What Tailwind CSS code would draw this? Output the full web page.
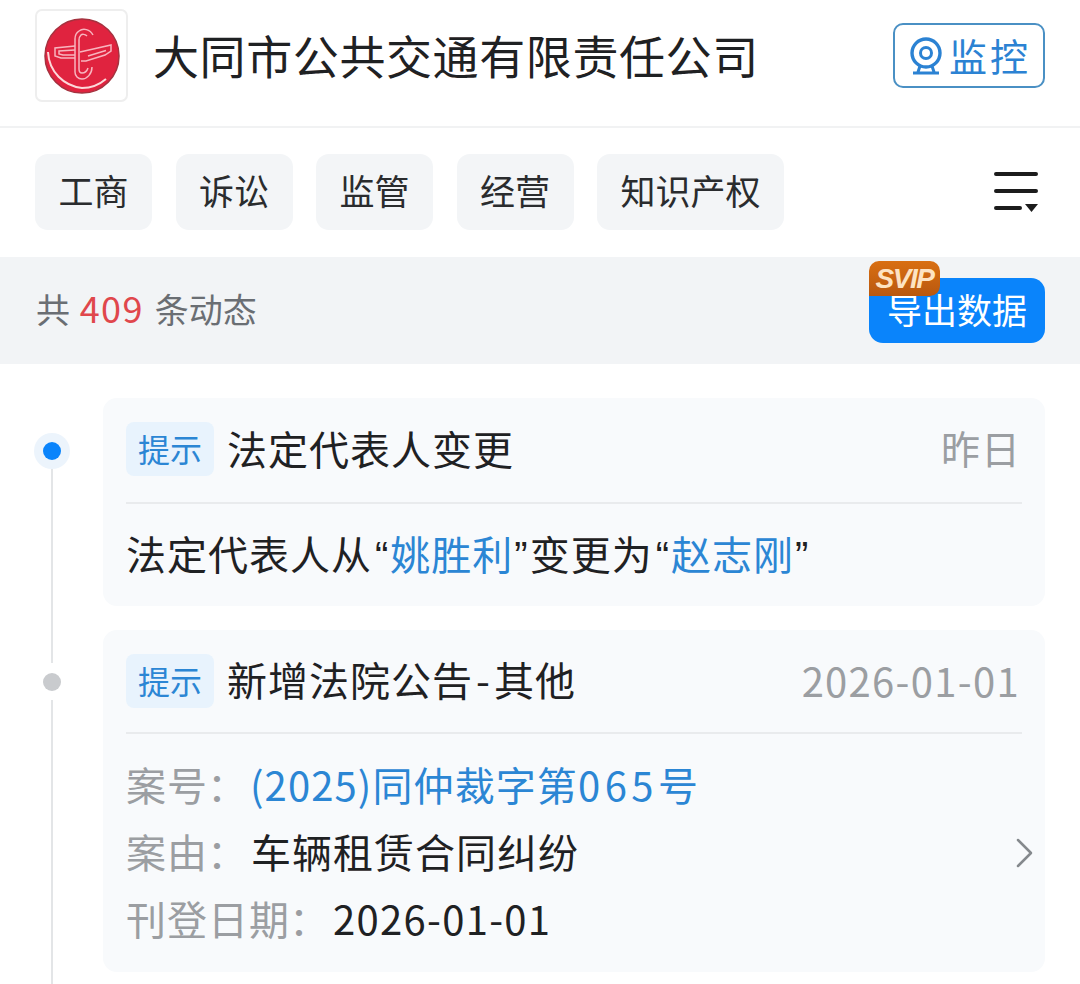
<!DOCTYPE html>
<html lang="zh-CN"><head><meta charset="utf-8">
<script src="https://cdn.jsdelivr.net/npm/@tailwindcss/browser@4"></script>
</head>
<body class="bg-white">
<div class="w-[1080px] h-[984px] overflow-hidden bg-white text-[#1f2123] font-['Noto_Sans_CJK_SC','Noto_Sans',sans-serif]">
  <!-- header -->
  <header class="h-[128px] border-b-2 border-[#f1f2f3] flex items-start pl-[35px] pr-[35px]">
    <div class="mt-[9px] w-[93px] h-[93px] rounded-[7px] border-2 border-[#eeeeee] flex items-center justify-center shrink-0">
      <svg width="84" height="84" viewBox="0 0 84 84" fill="none" class="shrink-0">
        <circle cx="42" cy="42" r="37" fill="#e0233f" stroke="#a5323f" stroke-width="1.500"/>
        <path d="M8 38C9 58 24 72 42 74 51 74 59 71 66 65" stroke="#fcd9da" stroke-width="2"/>
        <path d="M53 21C50 15 43 14 39 17 36 19 35 22 35 25V58C35 62 38 65 42 65 47 65 52 60 52 53M47 22C45 20 42 20 41 21 39 23 39 24 39 26V55C39 58 40 59 42 59 45 59 47 57 48 54" stroke="#f8b4be" stroke-width="1.500"/>
        <path d="M35 32 15 34V42L21 44H35M35 36 19 37V40L23 41H35M40 38 71 31V37L65 41 46 47H41M48 42 66 36.500" stroke="#f8b4be" stroke-width="1.500"/>
      </svg>
    </div>
    <h1 class="ml-[26px] mt-[24px] text-[46px] tracking-[0.600px] leading-[60px] font-normal whitespace-nowrap -translate-x-[1px]">大同市公共交通有限责任公司</h1>
    <button class="ml-auto mt-[23px] w-[152px] h-[65px] rounded-[10px] border-2 border-[#4a90c4] flex items-center pl-[14px] text-[#2b82d3] text-[38px] leading-none">
      <svg class="shrink-0" width="34" height="38" viewBox="0 0 34 38" fill="none" stroke="#2b82d3">
        <circle cx="17" cy="16" r="14" stroke-width="3.400"/>
        <circle cx="17" cy="16" r="5.500" stroke-width="3"/>
        <path d="M11 29 9 35M23 29l2 6M4 36h26" stroke-width="3"/>
      </svg>
      <span class="ml-[6px] -mt-[2px] whitespace-nowrap tracking-[3px]">监控</span>
    </button>
  </header>

  <!-- tabs -->
  <nav class="h-[129px] flex items-start pt-[26px] pl-[35px] pr-[42px] gap-[23.500px] text-[35px] text-[#2a2c2e]">
    <span class="h-[76px] w-[117px] rounded-[13px] bg-[#f3f5f7] flex items-center justify-center pb-[3px]">工商</span>
    <span class="h-[76px] w-[117px] rounded-[13px] bg-[#f3f5f7] flex items-center justify-center pb-[3px]">诉讼</span>
    <span class="h-[76px] w-[117px] rounded-[13px] bg-[#f3f5f7] flex items-center justify-center pb-[3px]">监管</span>
    <span class="h-[76px] w-[117px] rounded-[13px] bg-[#f3f5f7] flex items-center justify-center pb-[3px]">经营</span>
    <span class="h-[76px] w-[187px] rounded-[13px] bg-[#f3f5f7] flex items-center justify-center pb-[3px] whitespace-nowrap">知识产权</span>
    <svg class="ml-auto mt-[17px] shrink-0" width="44" height="42" viewBox="0 0 44 42" fill="none" stroke="#1c1c1c" stroke-width="4" stroke-linecap="round">
      <path d="M2 3h40M2 20h40M2 37h24"/>
      <path d="M31 33h13l-6.500 8z" fill="#1c1c1c" stroke="none"/>
    </svg>
  </nav>

  <!-- stats -->
  <section class="h-[107px] bg-[#f2f4f6] flex items-start pl-[36px] pr-[35px]">
    <p class="mt-[25px] text-[34px] leading-[50px] text-[#6a6e73] whitespace-nowrap">共 <span class="ml-[2px] mr-[3px] text-[36px] tracking-[1.500px] text-[#e0474c]">409</span> 条动态</p>
    <div class="relative ml-auto mt-[21px] w-[176px] h-[65px] rounded-[14px] bg-[#0a84fb] flex items-center justify-center pb-[2px] text-white text-[35px]">
      导出数据
      <span class="absolute left-0 top-[-17px] w-[71px] h-[35px] rounded-tl-[10px] rounded-tr-[10px] rounded-br-[10px] bg-gradient-to-b from-[#d96f12] to-[#b9580f] flex items-center justify-center text-[#fde3c2] text-[28px] tracking-[-1.500px] leading-none font-bold italic font-['Liberation_Sans',sans-serif]">SVIP</span>
    </div>
  </section>

  <!-- timeline -->
  <main class="pt-[34px] pr-[35px]">
    <!-- item 1 -->
    <article class="flex pb-[24px]">
      <div class="w-[103px] h-[208px] shrink-0 flex flex-col items-center">
        <div class="w-[36px] h-[36px] mt-[35px] ml-[1px] shrink-0 rounded-full bg-[#ecf4fc] flex items-center justify-center">
          <div class="w-[18px] h-[18px] rounded-full bg-[#0a84fb]"></div>
        </div>
        <div class="w-[2px] h-[194px] shrink-0 ml-[1px] bg-[#e3e5e7]"></div>
      </div>
      <div class="flex-1 h-[208px] rounded-[14px] bg-[#f8fafc] px-[23px] pt-[24px]">
        <div class="flex items-center h-[54px]">
          <span class="w-[88px] h-[54px] rounded-[8px] bg-[#e8f3fd] flex items-center justify-center pb-[2px] text-[#2b86d4] text-[32px]">提示</span>
          <h2 class="ml-[13px] -mt-[3px] text-[40px] tracking-[1px] font-normal whitespace-nowrap">法定代表人变更</h2>
          <span class="ml-auto mr-[1px] -mt-[3px] text-[39px] tracking-[1px] text-[#9b9ea2]">昨日</span>
        </div>
        <div class="mt-[26px] border-t-2 border-[#e9ebed] pt-[19px] text-[40px] leading-[60px] tracking-[1px] whitespace-nowrap">法定代表人从<span class="pl-[3px] pr-[1px] font-['Liberation_Sans']">“</span><span class="text-[#2b86d4]">姚胜利</span><span class="px-[1px] font-['Liberation_Sans']">”</span>变更为<span class="pl-[3px] pr-[1px] font-['Liberation_Sans']">“</span><span class="text-[#2b86d4]">赵志刚</span><span class="px-[1px] font-['Liberation_Sans']">”</span></div>
      </div>
    </article>
    <!-- item 2 -->
    <article class="flex">
      <div class="w-[103px] shrink-0 flex flex-col items-center">
        <div class="w-[18px] h-[18px] mt-[43px] ml-[1px] rounded-full bg-[#c9cbce]"></div>
        <div class="w-[2px] h-[300px] mt-[9px] ml-[1px] bg-[#e3e5e7]"></div>
      </div>
      <div class="flex-1 h-[342px] rounded-[14px] bg-[#f8fafc] px-[23px] pt-[24px] relative">
        <div class="flex items-center h-[54px]">
          <span class="w-[88px] h-[54px] rounded-[8px] bg-[#e8f3fd] flex items-center justify-center pb-[2px] text-[#2b86d4] text-[32px]">提示</span>
          <h2 class="ml-[13px] -mt-[4px] text-[40px] tracking-[1px] font-normal whitespace-nowrap">新增法院公告<span class="mx-[3px]">-</span>其他</h2>
          <span class="ml-auto mr-[2px] -mt-[3px] text-[40px] tracking-[1.300px] text-[#9b9ea2] whitespace-nowrap">2026-01-01</span>
        </div>
        <div class="mt-[24px] border-t-2 border-[#e9ebed] pt-[17px] text-[40px] leading-[67px] whitespace-nowrap">
          <div class="flex"><span class="w-[124px] text-[#9b9ea2] tracking-[1px]">案号<span class="-ml-[1px]">：</span></span><span class="text-[#2b86d4] tracking-[1.100px]">(2025)同仲裁字第<span class="tracking-[4.500px]">065</span>号</span></div>
          <div class="flex"><span class="w-[125px] text-[#9b9ea2] tracking-[1px]">案由<span class="-ml-[1px]">：</span></span><span class="tracking-[1px]">车辆租赁合同纠纷</span></div>
          <div class="flex"><span class="w-[207px] text-[#9b9ea2] tracking-[1px]">刊登日期<span class="-ml-[1px]">：</span></span><span class="tracking-[1.300px]">2026-01-01</span></div>
        </div>
        <svg class="absolute right-[12px] top-[208px]" width="18" height="30" viewBox="0 0 18 30" fill="none" stroke="#85898d" stroke-width="2.500" stroke-linecap="round" stroke-linejoin="round"><path d="M3 2l13 13L3 28"/></svg>
      </div>
    </article>
  </main>
</div>
</body></html>
